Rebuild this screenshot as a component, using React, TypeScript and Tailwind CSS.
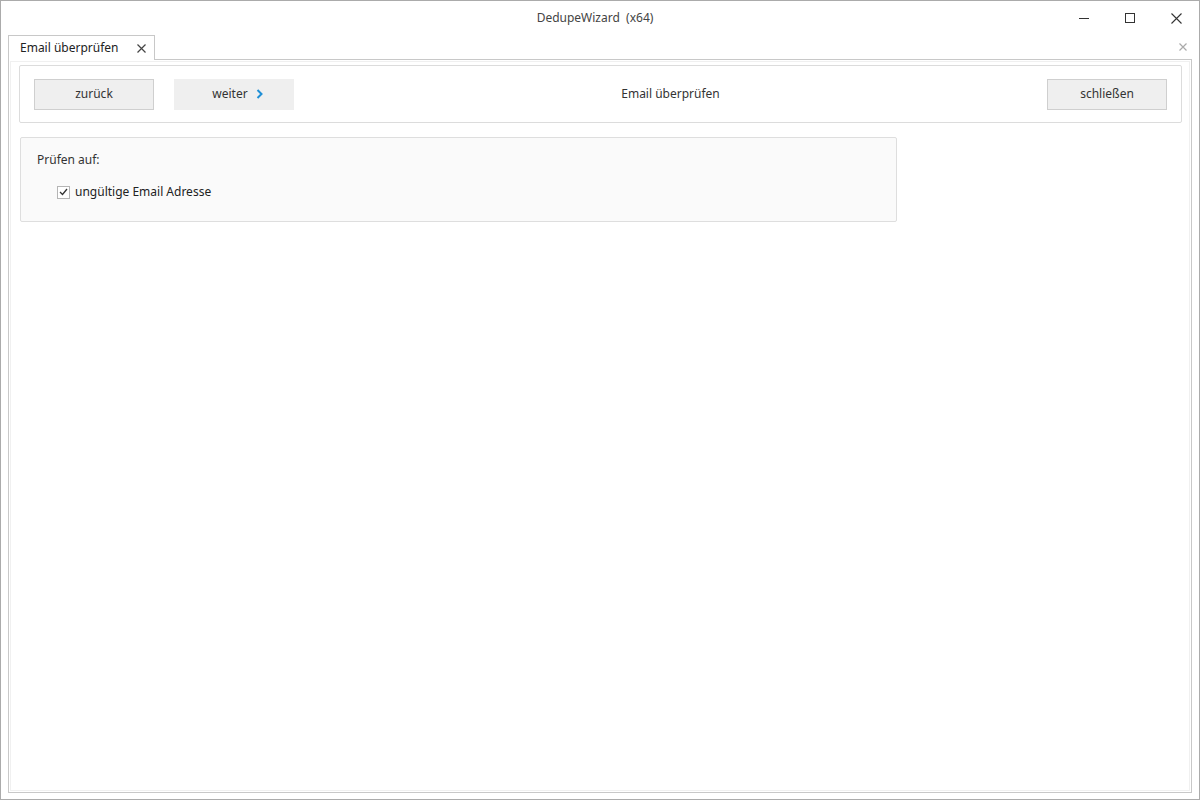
import React from "react";

const font = { fontFamily: '"Noto Sans", "Open Sans", sans-serif' };

export default function App() {
  return (
    <div
      className="w-[1200px] h-[800px] border border-[#ababab] bg-white flex flex-col text-[12px] text-[#333]"
      style={font}
    >
      {/* Title bar */}
      <div className="h-[34px] flex items-center relative shrink-0">
        <div className="flex-1 text-center text-[12px] text-[#444] pb-[1px] pr-[10px]">DedupeWizard&nbsp;&nbsp;(x64)</div>
        <div className="absolute right-0 top-0 h-[34px] flex items-center">
          <div className="w-[46px] h-[34px] flex items-center justify-center">
            <div className="w-[10px] h-px bg-[#333]" />
          </div>
          <div className="w-[46px] h-[34px] flex items-center justify-center">
            <div className="w-[10px] h-[10px] border border-[#333]" />
          </div>
          <div className="w-[46px] h-[34px] flex items-center justify-center">
            <svg width="11" height="11" viewBox="0 0 11 11">
              <path d="M0.5 0.5 L10.5 10.5 M10.5 0.5 L0.5 10.5" stroke="#333" strokeWidth="1.1" />
            </svg>
          </div>
        </div>
      </div>

      {/* Tab strip */}
      <div className="h-[24px] flex items-end px-[7px] relative shrink-0">
        <div className="h-[25px] w-[147px] border border-b-0 border-[#c8c8c8] bg-white flex items-center pl-[11px] pr-[8px] -mb-px relative z-10">
          <span className="flex-1 text-[#222]">Email überprüfen</span>
          <svg width="9" height="9" viewBox="0 0 9 9">
            <path d="M0.5 0.5 L8.5 8.5 M8.5 0.5 L0.5 8.5" stroke="#444" strokeWidth="1.2" />
          </svg>
        </div>
        <div className="absolute right-[12px] top-[8px]">
          <svg width="8" height="8" viewBox="0 0 8 8">
            <path d="M0.5 0.5 L7.5 7.5 M7.5 0.5 L0.5 7.5" stroke="#aaa" strokeWidth="1.2" />
          </svg>
        </div>
      </div>

      {/* Panel */}
      <div className="flex-1 mx-[7px] mb-[6px] border border-[#c8c8c8] p-px">
        <div className="h-full border border-[#f0f0f0] px-[8px] pt-[3px] flex flex-col">
          {/* Toolbar */}
          <div className="h-[58px] w-[1163px] border border-[#dcdcdc] rounded-[2px] flex items-center px-[14px]">
            <button className="w-[120px] h-[31px] bg-[#efefef] border border-[#cfcfcf] text-[#333]">zurück</button>
            <button className="ml-[20px] w-[120px] h-[31px] bg-[#efefef] text-[#333] flex items-center justify-center gap-[8px] pl-[7px]">
              <span>weiter</span>
              <svg width="7" height="10" viewBox="0 0 7 10">
                <path d="M1.5 1 L5.5 5 L1.5 9" stroke="#1f8fd6" strokeWidth="2" fill="none" />
              </svg>
            </button>
            <div className="flex-1 text-center text-[#333]">Email überprüfen</div>
            <button className="w-[120px] h-[31px] bg-[#efefef] border border-[#cfcfcf] text-[#333]">schließen</button>
          </div>

          {/* Group box */}
          <div className="mt-[14px] ml-px w-[877px] h-[85px] bg-[#fafafa] border border-[#dedede] rounded-[2px] pl-[16px] pt-[13px]">
            <div className="text-[#333]">Prüfen auf:</div>
            <div className="flex items-center mt-[14px] ml-[20px]">
              <div className="w-[13px] h-[13px] border border-[#b5b5b5] bg-white flex items-center justify-center">
                <svg width="9" height="8" viewBox="0 0 9 8">
                  <path d="M1 4 L3.5 6.5 L8 1" stroke="#333" strokeWidth="1.3" fill="none" />
                </svg>
              </div>
              <span className="ml-[5px] text-[#222]">ungültige Email Adresse</span>
            </div>
          </div>
        </div>
      </div>
    </div>
  );
}
